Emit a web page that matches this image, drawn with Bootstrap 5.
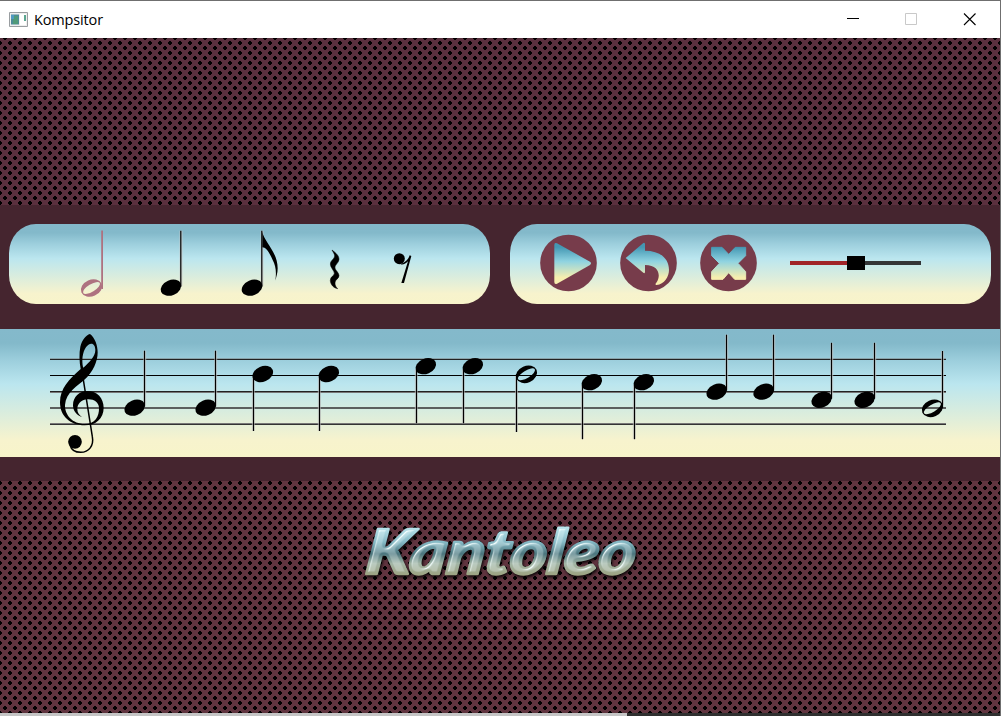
<!DOCTYPE html>
<html lang="en">
<head>
<meta charset="utf-8">
<title>Kompsitor</title>
<link href="https://cdn.jsdelivr.net/npm/bootstrap@5.3.0/dist/css/bootstrap.min.css" rel="stylesheet">
<style>
body{width:1001px;height:716px;overflow:hidden;font-family:"Open Sans","Noto Sans",sans-serif;color:#000}
.app-window{height:716px;border-right:1px solid #6f6f6f}
.title-bar{height:38px;border-top:1px solid #6f6f6f;background:#fff;padding-left:9px}
.title-text{font-size:14.5px;line-height:37px;margin-left:6px;letter-spacing:-.15px}
.caption-btn{width:58px;height:37px}
.dots-top,.dots-bottom{background-size:10px 10px;background-image:url("data:image/svg+xml,%3Csvg xmlns='http://www.w3.org/2000/svg' width='10' height='10' viewBox='0 0 10 10' shape-rendering='crispEdges'%3E%3Cpath d='M0 1h1v4h-1zM9 1h1v4h-1zM1 2h1v2h-1zM8 2h1v2h-1zM4 6h2v4h-2zM3 7h1v2h-1zM6 7h1v2h-1z'/%3E%3C/svg%3E")}
.dots-top{height:167px;background-color:#5a303e;background-position:0 2px}
.dots-bottom{height:232px;background-color:#60343f;background-position:0 -1px}
.board{height:276px;background:#45252f;padding-top:19px}
.sky{background:linear-gradient(#84b9cb 0,#83b9ca 11%,#9dcfdd 25%,#bbe6ef 43%,#f7f3cd 87%,#f8f4ca 100%)}
.tool-panel{width:481px;height:80px;border-radius:27px/29px;overflow:hidden}
.tool-row{padding:0 9px;gap:20px}
.notes-pad{padding-left:40px}
.play-pad{padding-left:30px}
.round-btns{gap:23px}
.staff-panel{height:128px;margin-top:25px}
.vol{width:131px;height:14px;margin-left:33px;margin-top:-2px}
.vol-low{width:57px;height:4px;background:#a02428}
.vol-knob{width:18px;height:14px;background:#000}
.vol-high{height:4px;background:#333536}
.foot-line{height:3px;background:linear-gradient(90deg,#c4c4c4 627px,#303030 627px)}
.word{font-family:Lato,sans-serif;font-weight:900;font-style:italic;font-size:62px}
svg{display:block;flex:none}
</style>
</head>
<body>
<svg width="0" height="0" class="position-absolute">
<defs>
<linearGradient id="ig" gradientUnits="userSpaceOnUse" x1="0" y1="84" x2="0" y2="206"><stop offset=".1" stop-color="#4497b3"/><stop offset=".45" stop-color="#8fd3e1"/><stop offset=".85" stop-color="#f7eeae"/></linearGradient>
<ellipse id="head" rx="10.7" ry="7.6" transform="rotate(-23)"/>
<mask id="slit" maskUnits="userSpaceOnUse" x="-14" y="-12" width="28" height="24"><path fill="#fff" d="M-14-12h28v24h-28z"/><ellipse rx="9.700" ry="3.700" transform="rotate(-31)" fill="#000"/></mask>
<g id="halfhead" mask="url(#slit)"><ellipse rx="11" ry="8.300" transform="rotate(-24)"/></g>
<g id="up"><path d="M10-57V-2" stroke="#c9c9c9" stroke-width="3" opacity=".65"/><use href="#head"/><path d="M9.8-57V-1" stroke="#000" stroke-width="1.2"/></g>
<g id="down"><path d="M-9.5 3V57" stroke="#c9c9c9" stroke-width="3" opacity=".65"/><use href="#head"/><path d="M-9.3 1V57" stroke="#000" stroke-width="1.2"/></g>
</defs>
</svg>
<div class="app-window d-flex flex-column">
<header class="title-bar d-flex align-items-center">
<svg width="19" height="15"><path fill="#eee" stroke="#999da0" d="M.5.5h18v14H.5z"/><path fill="#fff" d="M11 2h6v11h-6z"/><path fill="#4c8b98" d="M2 2.5h8v10H2z"/><path fill="#4f9a78" d="M4 4h5v8H4z"/><path fill="#4f9ac0" d="M2 3h3v4H2z"/><path fill="#5ba690" d="M15 3h2v6h-2z"/></svg>
<span class="title-text">Kompsitor</span>
<div class="ms-auto d-flex me-1">
<svg class="caption-btn" viewBox="0 0 58 37"><path d="M25 17.5h12" stroke="#000"/></svg>
<svg class="caption-btn" viewBox="0 0 58 37"><path d="M25.500 12.500h11v11h-11z" fill="none" stroke="#c9c9c9"/></svg>
<svg class="caption-btn" viewBox="0 0 58 37"><path d="M26 12.500l11.500 11.500m0-11.500L26 24" stroke="#000" stroke-width="1.100"/></svg>
</div>
</header>
<div class="dots-top"></div>
<main class="board">
<div class="tool-row d-flex">
<section class="tool-panel notes-pad sky d-flex">
<svg width="80" height="80" viewBox="49 224 80 80" fill="#ae7280"><use href="#halfhead" x="91.500" y="288"/><path d="M101.200 230.500h1.800V289h-1.800z"/></svg>
<svg width="80" height="80" viewBox="129 224 80 80"><use href="#up" x="171" y="287.700"/></svg>
<svg width="80" height="80" viewBox="209 224 80 80"><use href="#up" x="252" y="287.700"/><path transform="translate(230 205)scale(.33333)" d="M97 80C102 110 143 140 143 190C143 205 139 215 136 227C140 200 137 182 128 165C118 142 108 127 97 127Z"/></svg>
<svg width="80" height="80" viewBox="289 224 80 80"><path transform="translate(230 205)scale(.33333)" d="M306 135C318 144 327 152 327 163C327 174 313 180 315 189C316 196 327 203 327 212C327 221 315 223 315 234C315 242 318 246 323 251C312 250 301 239 301 226C301 214 313 213 313 205C313 197 301 188 301 177C301 166 314 162 314 153C314 146 309 142 306 135Z" stroke="#000" stroke-width="1.500"/></svg>
<svg width="80" height="80" viewBox="369 224 80 80"><g transform="translate(230 205)scale(.33333)"><circle cx="508" cy="161" r="16.500"/><path d="M512 177C526 173 536 162 539 151L544 153L522 234H514L534 169C528 176 520 180 512 178Z"/></g></svg>
</section>
<section class="tool-panel play-pad sky d-flex align-items-center">
<div class="round-btns d-flex">
<svg width="57" height="80" viewBox="105 27 171 240"><circle cx="190.500" cy="144" r="85" fill="#773c4b"/><path fill="url(#ig)" d="M148 90q0-9 8-5L255 140q6 5 0 10L156 206q-8 3-8-5Z"/></svg>
<svg width="57" height="80" viewBox="345 27 171 240"><circle cx="430.500" cy="144" r="85" fill="#773c4b"/><path fill="url(#ig)" d="M362 129L415 84q5-2 5 4V107C465 107 492 130 492 165C492 185 478 208 455 210C449 209 452 205 455 202C467 185 465 150 420 150V170q0 7-5 3Z"/></svg>
<svg width="57" height="80" viewBox="585 27 171 240"><circle cx="670.500" cy="144" r="85" fill="#773c4b"/><path fill="url(#ig)" stroke="url(#ig)" stroke-width="3" stroke-linejoin="round" d="M620 97H651L671 118L691 97H722V122L699 145L722 170V193H689L671 173L654 193H620V170L643 145L620 122Z"/></svg>
</div>
<div class="vol d-flex align-items-center"><div class="vol-low"></div><div class="vol-knob"></div><div class="vol-high flex-grow-1"></div></div>
</section>
</div>
<section class="staff-panel sky">
<svg width="1000" height="128" viewBox="0 329 1000 128">
<g shape-rendering="crispEdges"><path fill="#222" d="M50 359h896v1H50zM50 391h896v1H50z"/><path fill="#000" d="M50 375h896v1H50z"/><path fill="#777" d="M50 358h896v1H50z" opacity=".5"/><path fill="#777" d="M50 392h896v1H50zM50 423h896v1H50z"/><path fill="#5c5f5e" d="M50 407h896v2H50z"/><path fill="#333" d="M50 424h896v1H50z"/></g>
<g transform="translate(40 325)scale(.33333)">
<path fill-rule="evenodd" d="M150 27C165 38 173 62 173 82C173 112 158 140 138 160C112 184 78 202 75 240C74 270 98 297 134 297C165 297 178 275 177 248C176 232 162 222 143 223C122 224 112 238 112 252C112 264 118 270 126 276C110 270 99 258 99 240C99 216 118 198 142 198C172 198 191 220 191 248C191 280 168 301 134 301C92 301 60 275 60 232C60 190 88 162 122 132C118 110 117 85 121 65C126 45 138 30 150 27ZM153 56C138 58 128 80 127 104C127 115 128 122 130 128C148 112 166 95 166 75C166 62 160 55 153 56Z"/>
<path d="M129 158L157 335C162 362 147 382 122 382C106 382 94 375 90 360" fill="none" stroke="#000" stroke-width="4.500"/><circle cx="105" cy="350.500" r="20.500"/></g>
<use href="#up" x="134.700" y="407.700"/><use href="#up" x="205.700" y="407.700"/>
<use href="#down" x="262.800" y="374"/><use href="#down" x="328.800" y="374"/>
<use href="#down" x="425.800" y="366.200"/><use href="#down" x="472.800" y="366.200"/>
<path d="M516.500 376V432" stroke="#c9c9c9" stroke-width="3" opacity=".65"/><use href="#halfhead" x="526.500" y="374.300"/><path d="M516.500 374V432" stroke="#000" stroke-width="1.200"/>
<use href="#down" x="591.800" y="382.200"/><use href="#down" x="643.800" y="382.200"/>
<use href="#up" x="716.700" y="391.700"/><use href="#up" x="763.700" y="391.700"/>
<use href="#up" x="821.700" y="399.800"/><use href="#up" x="864.700" y="399.800"/>
<path d="M942.500 351V405" stroke="#c9c9c9" stroke-width="3" opacity=".65"/><use href="#halfhead" x="932.400" y="408.300"/><path d="M942.500 351V408" stroke="#000" stroke-width="1.200"/>
</svg>
</section>
</main>
<footer class="dots-bottom">
<svg width="1000" height="232" viewBox="0 481 1000 232">
<defs>
<linearGradient id="wg" gradientUnits="userSpaceOnUse" x1="0" y1="-46" x2="0" y2="2"><stop offset="0" stop-color="#b9e4ec"/><stop offset=".3" stop-color="#86bac6"/><stop offset=".55" stop-color="#4a747c"/><stop offset=".75" stop-color="#a2b5a5"/><stop offset="1" stop-color="#9da381"/></linearGradient>
<filter id="bevel" x="-5%" y="-20%" width="110%" height="150%" color-interpolation-filters="sRGB">
<feDropShadow in="SourceGraphic" dx="1" dy="2" stdDeviation="1.8" flood-color="#000" flood-opacity=".85" result="sh"/>
<feGaussianBlur in="SourceAlpha" stdDeviation="1.8" result="b"/>
<feSpecularLighting in="b" surfaceScale="4" specularConstant="1" specularExponent="18" lighting-color="#f4ffff" result="s"><feDistantLight azimuth="235" elevation="48"/></feSpecularLighting>
<feComposite in="s" in2="SourceAlpha" operator="in" result="s2"/>
<feMerge><feMergeNode in="sh"/><feMergeNode in="s2"/></feMerge>
</filter>
</defs>
<g filter="url(#bevel)"><text class="word" transform="translate(364 573.500)skewX(-7)" fill="url(#wg)" stroke="url(#wg)" stroke-width="2.500" stroke-linejoin="round" textLength="270" lengthAdjust="spacingAndGlyphs">Kantoleo</text></g>
</svg>
</footer>
<div class="foot-line"></div>
</div>
<script src="https://cdn.jsdelivr.net/npm/bootstrap@5.3.0/dist/js/bootstrap.bundle.min.js"></script>
</body>
</html>
